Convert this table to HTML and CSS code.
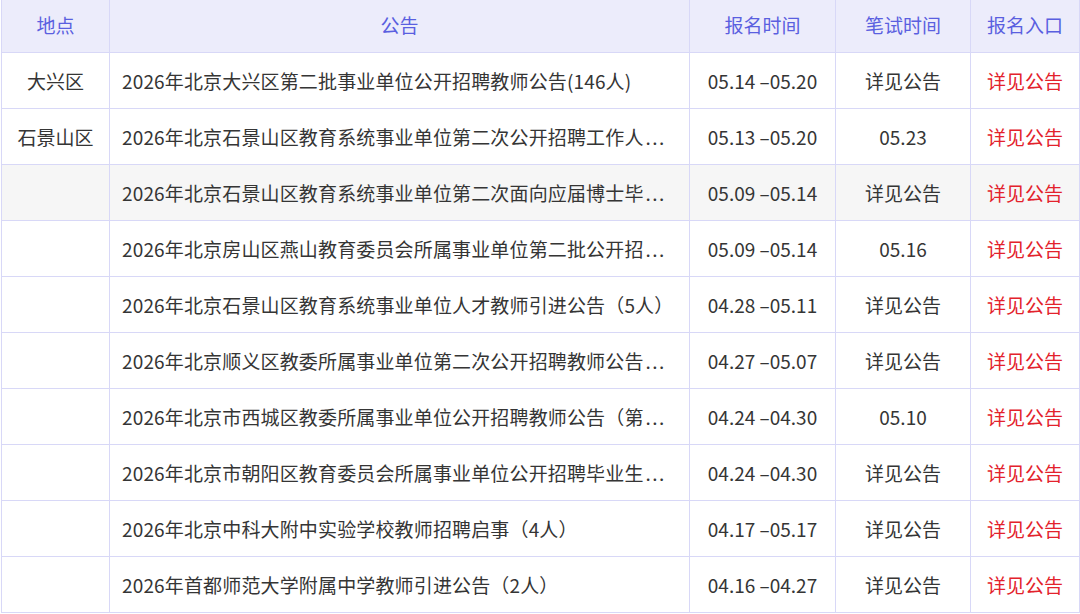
FILE: index.html
```html
<!DOCTYPE html>
<html lang="zh-CN">
<head>
<meta charset="utf-8">
<link rel="stylesheet" href="styles.css">
</head>
<body>
<table class="jobs">
  <colgroup>
    <col class="c-place">
    <col class="c-title">
    <col class="c-apply">
    <col class="c-exam">
    <col class="c-link">
  </colgroup>
  <thead>
    <tr><th>地点</th><th>公告</th><th>报名时间</th><th>笔试时间</th><th>报名入口</th></tr>
  </thead>
  <tbody>
    <tr><td>大兴区</td><td class="title">2026年北京大兴区第二批事业单位公开招聘教师公告(146人)</td><td>05.14 –05.20</td><td>详见公告</td><td class="link">详见公告</td></tr>
    <tr><td>石景山区</td><td class="title">2026年北京石景山区教育系统事业单位第二次公开招聘工作人<span class="dots">...</span></td><td>05.13 –05.20</td><td>05.23</td><td class="link">详见公告</td></tr>
    <tr class="hl"><td></td><td class="title">2026年北京石景山区教育系统事业单位第二次面向应届博士毕<span class="dots">...</span></td><td>05.09 –05.14</td><td>详见公告</td><td class="link">详见公告</td></tr>
    <tr><td></td><td class="title">2026年北京房山区燕山教育委员会所属事业单位第二批公开招<span class="dots">...</span></td><td>05.09 –05.14</td><td>05.16</td><td class="link">详见公告</td></tr>
    <tr><td></td><td class="title">2026年北京石景山区教育系统事业单位人才教师引进公告（5人）</td><td>04.28 –05.11</td><td>详见公告</td><td class="link">详见公告</td></tr>
    <tr><td></td><td class="title">2026年北京顺义区教委所属事业单位第二次公开招聘教师公告<span class="dots">...</span></td><td>04.27 –05.07</td><td>详见公告</td><td class="link">详见公告</td></tr>
    <tr><td></td><td class="title">2026年北京市西城区教委所属事业单位公开招聘教师公告（第<span class="dots">...</span></td><td>04.24 –04.30</td><td>05.10</td><td class="link">详见公告</td></tr>
    <tr><td></td><td class="title">2026年北京市朝阳区教育委员会所属事业单位公开招聘毕业生<span class="dots">...</span></td><td>04.24 –04.30</td><td>详见公告</td><td class="link">详见公告</td></tr>
    <tr><td></td><td class="title">2026年北京中科大附中实验学校教师招聘启事（4人）</td><td>04.17 –05.17</td><td>详见公告</td><td class="link">详见公告</td></tr>
    <tr><td></td><td class="title">2026年首都师范大学附属中学教师引进公告（2人）</td><td>04.16 –04.27</td><td>详见公告</td><td class="link">详见公告</td></tr>
  </tbody>
</table>
</body>
</html>
```

FILE: styles.css
```css
html, body {
  margin: 0;
  padding: 0;
  background: #ffffff;
}
body {
  padding-left: 1px;
  font-family: "Noto Sans CJK SC", "Noto Sans", sans-serif;
  font-size: 19px;
  color: #353535;
}
.jobs {
  border-collapse: collapse;
  table-layout: fixed;
  width: 1078px;
}
.c-place { width: 108px; }
.c-title { width: 580px; }
.c-apply { width: 146px; }
.c-exam { width: 135px; }
.c-link { width: 109px; }
.jobs th {
  height: 52px;
  padding: 0 0 2px 0;
  box-sizing: border-box;
  background: #ececfb;
  color: #5a5fe0;
  font-weight: normal;
  text-align: center;
  border: 1px solid #d8d8f7;
  border-top: none;
}
.jobs td {
  height: 55px;
  padding: 0;
  text-align: center;
  border: 1px solid #d8d8f7;
  white-space: nowrap;
  overflow: hidden;
}
.jobs td.title {
  text-align: left;
  padding-left: 12px;
  padding-right: 12px;
  letter-spacing: 0.15px;
}
.dots {
  letter-spacing: 1.5px;
  margin-left: 2px;
}
.jobs td.link {
  color: #e3222c;
}
.jobs tr.hl td {
  background: #f6f6f6;
}
```
